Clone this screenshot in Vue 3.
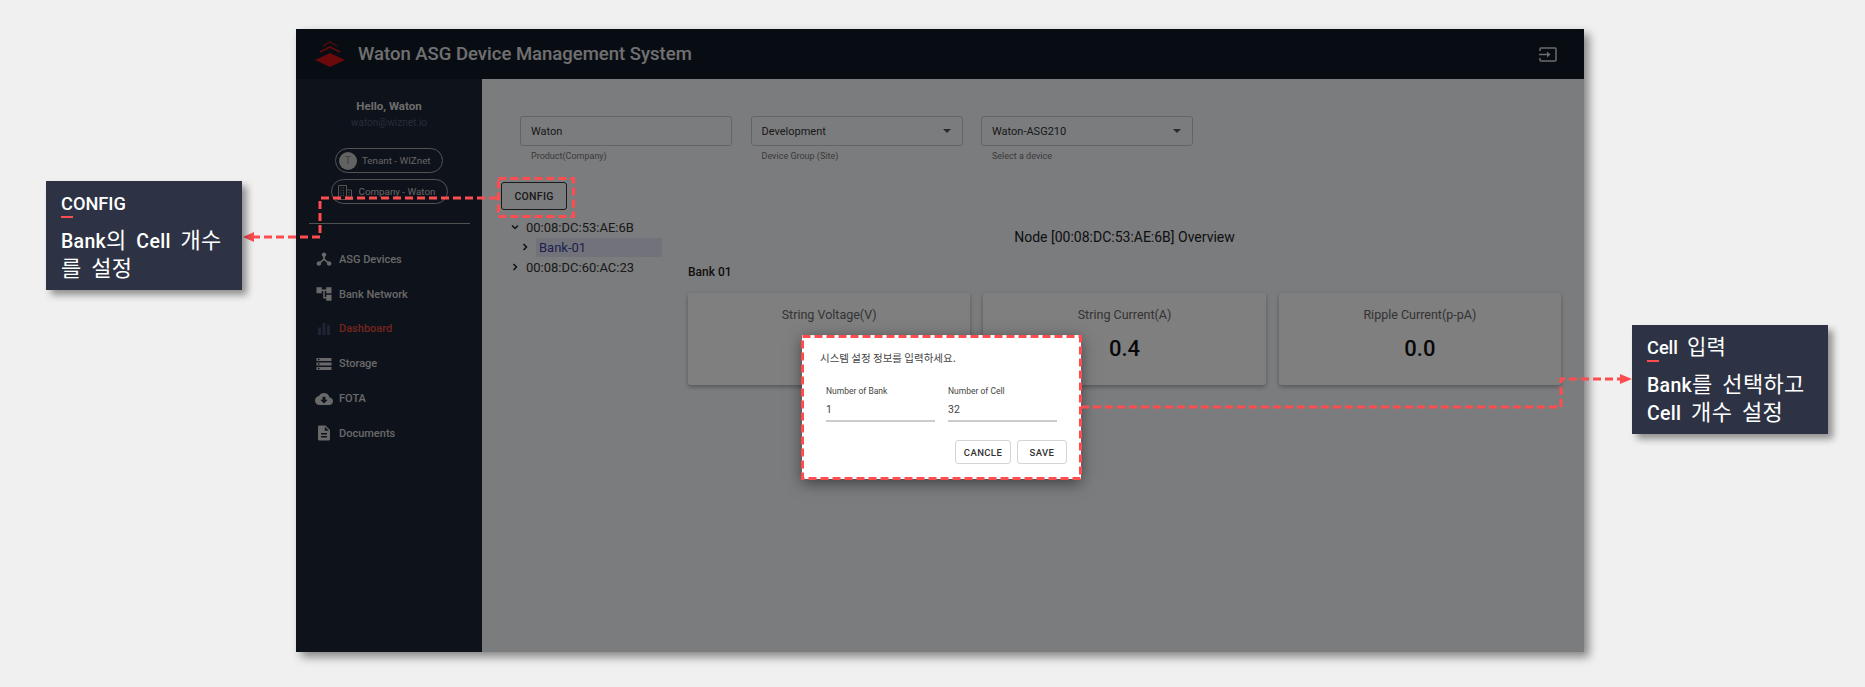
<script setup>
const fields = [
  { value: 'Waton', help: 'Product(Company)', select: false },
  { value: 'Development', help: 'Device Group (Site)', select: true },
  { value: 'Waton-ASG210', help: 'Select a device', select: true }
]

const menu = [
  { label: 'ASG Devices', d: 'M12 3.2a3 3 0 0 1 1.2 5.75V12l4.1 3.4a3 3 0 1 1-1.3 1.6L12 13.7 8 17a3 3 0 1 1-1.3-1.6l4.1-3.4V8.95A3 3 0 0 1 12 3.2z' },
  { label: 'Bank Network', d: 'M22 11V3h-7v3H9V3H2v8h7V8h2v10h4v3h7v-8h-7v3h-2V8h2v3z' },
  { label: 'Dashboard', active: true, d: 'M4 10h4v10H4zM10 4h4v16h-4zM16 7h4v13h-4z' },
  { label: 'Storage', d: 'M2 20h20v-4H2v4zm2-3h2v2H4v-2zM2 4v4h20V4H2zm4 3H4V5h2v2zm-4 7h20v-4H2v4zm2-3h2v2H4v-2z' },
  { label: 'FOTA', d: 'M19.35 10.04C18.67 6.59 15.64 4 12 4 9.11 4 6.6 5.64 5.35 8.04 2.34 8.36 0 10.91 0 14c0 3.31 2.69 6 6 6h13c2.76 0 5-2.24 5-5 0-2.64-2.05-4.78-4.65-4.96zM17 13l-5 5-5-5h3V9h4v4h3z' },
  { label: 'Documents', d: 'M14 2H6c-1.1 0-1.99.9-1.99 2L4 20c0 1.1.89 2 1.99 2H18c1.1 0 2-.9 2-2V8l-6-6zm2 16H8v-2h8v2zm0-4H8v-2h8v2zm-3-5V3.5L18.5 9H13z' }
]

// the first value sits behind the dialog in the reference
const cards = [
  { title: 'String Voltage(V)', value: '' },
  { title: 'String Current(A)', value: '0.4' },
  { title: 'Ripple Current(p-pA)', value: '0.0' }
]
</script>

<template>
  <div class="page">
    <div class="frame">
      <header class="topbar">
        <svg class="logo" viewBox="0 0 30 26" width="30" height="26" fill="none">
          <path d="M8 5l7-4 7 4" stroke="#b01818" stroke-width="1.200" />
          <path d="M5 11l10-5 10 5" stroke="#c81818" stroke-width="1.800" />
          <path d="M15 12l15 7-15 7-15-7z" fill="#d41414" />
        </svg>
        <span class="app-title">Waton ASG Device Management System</span>
        <svg class="exit" viewBox="0 0 18 15" width="18" height="15" fill="none" stroke="#d8d8d8" stroke-width="1.500">
          <path d="M1 4V2a1 1 0 0 1 1-1h14a1 1 0 0 1 1 1v11a1 1 0 0 1-1 1H2a1 1 0 0 1-1-1v-2" />
          <path d="M0 7.500h10" />
          <path d="M8 4.500l3.500 3-3.500 3z" fill="#d8d8d8" stroke="none" />
        </svg>
      </header>

      <div class="body">
        <aside class="sidebar">
          <div class="hello">Hello, Waton</div>
          <div class="email">waton@wiznet.io</div>
          <div class="chip chip-tenant">
            <span class="avatar">T</span>
            <span>Tenant - WIZnet</span>
          </div>
          <div class="chip chip-company">
            <svg viewBox="0 0 16 16" width="16" height="16" fill="none" stroke="#a8a8a8">
              <path d="M1.500 15V1.500h8V15M9.500 6h5V15M0 15.500h16M3.500 4h1M6 4h1M3.500 6.500h1M6 6.500h1M3.500 9h1M6 9h1M3.500 11.500h1M6 11.500h1M11.500 8.500h1M11.500 11h1" />
            </svg>
            <span>Company - Waton</span>
          </div>
          <div class="divider"></div>
          <nav class="menu">
            <div v-for="item in menu" :key="item.label" class="menu-item" :class="{ active: item.active }">
              <svg viewBox="0 0 24 24" width="18" height="18"><path :d="item.d" /></svg>
              <span>{{ item.label }}</span>
            </div>
          </nav>
        </aside>

        <main class="main">
          <div class="fields">
            <div v-for="f in fields" :key="f.help" class="field">
              <div class="field-box">
                <span>{{ f.value }}</span>
                <i v-if="f.select" class="caret"></i>
              </div>
              <div class="field-help">{{ f.help }}</div>
            </div>
          </div>

          <button class="config-btn">CONFIG</button>

          <div class="columns">
            <div class="tree">
              <div class="tree-row">
                <svg viewBox="0 0 10 10" width="10" height="10"><path d="M2 3.500l3 3 3-3" /></svg>
                <span>00:08:DC:53:AE:6B</span>
              </div>
              <div class="tree-row tree-child">
                <svg viewBox="0 0 10 10" width="10" height="10"><path d="M3.500 2l3 3-3 3" /></svg>
                <span class="tree-selected">Bank-01</span>
              </div>
              <div class="tree-row">
                <svg viewBox="0 0 10 10" width="10" height="10"><path d="M3.500 2l3 3-3 3" /></svg>
                <span>00:08:DC:60:AC:23</span>
              </div>
            </div>

            <div class="overview">
              <div class="overview-title">Node [00:08:DC:53:AE:6B] Overview</div>
              <div class="bank-title">Bank 01</div>
              <div class="cards">
                <div v-for="c in cards" :key="c.title" class="card">
                  <div class="card-title">{{ c.title }}</div>
                  <div v-if="c.value" class="card-value">{{ c.value }}</div>
                </div>
              </div>
            </div>
          </div>
        </main>
      </div>

      <div class="scrim"></div>

      <div class="dialog">
        <p class="dialog-text">시스템 설정 정보를 입력하세요.</p>
        <div class="dialog-inputs">
          <label class="dialog-input">
            <span>Number of Bank</span>
            <b>1</b>
          </label>
          <label class="dialog-input">
            <span>Number of Cell</span>
            <b>32</b>
          </label>
        </div>
        <div class="dialog-actions">
          <button class="btn-cancel">CANCLE</button>
          <button class="btn-save">SAVE</button>
        </div>
      </div>
    </div>

    <svg class="marks" width="1865" height="687" fill="none" stroke="#ff4d4f" stroke-width="3" stroke-dasharray="8 4">
      <rect x="498.500" y="178.500" width="75" height="38" />
      <rect x="802.500" y="336.500" width="278" height="142" />
      <path d="M497 198H320V237H252" />
      <path d="M1081 407H1561V379H1622" />
      <path d="M243 237l11-5v10z" fill="#ff4d4f" stroke="none" />
      <path d="M1632 379l-12-5v10z" fill="#ff4d4f" stroke="none" />
    </svg>

    <div class="note note-left">
      <div class="note-title"><span class="lat"><span class="first">C</span>ONFIG</span></div>
      <div class="note-text"><span class="lat">Bank</span>의 <span class="lat">Cell</span> 개수<br />를 설정</div>
    </div>
    <div class="note note-right">
      <div class="note-title"><span class="lat"><span class="first">C</span>ell</span> 입력</div>
      <div class="note-text"><span class="lat">Bank</span>를 선택하고<br /><span class="lat">Cell</span> 개수 설정</div>
    </div>
  </div>
</template>

<style>
body {
  background: #f0f0f0;
}
</style>

<style scoped>
.page {
  position: relative;
  width: 1865px;
  height: 687px;
  box-sizing: border-box;
  padding: 29px 0 0 296px;
  overflow: hidden;
  background: #f0f0f0;
  font-family: Roboto, "Noto Sans CJK KR", sans-serif;
}

.frame {
  position: relative;
  width: 1288px;
  height: 623px;
  display: flex;
  flex-direction: column;
  box-shadow: 5px 5px 9px rgba(0, 0, 0, 0.45);
}

.topbar {
  height: 50px;
  flex: none;
  display: flex;
  align-items: center;
  padding: 0 27px 0 19px;
  background: #111827;
}

.logo {
  margin-right: 13px;
}

.app-title {
  font-size: 18.500px;
  font-weight: 500;
  color: #e0e0e0;
}

.exit {
  margin-left: auto;
}

.body {
  flex: 1;
  display: flex;
  min-height: 0;
}

.sidebar {
  width: 186px;
  flex: none;
  display: flex;
  flex-direction: column;
  align-items: center;
  padding-top: 20px;
  box-sizing: border-box;
  background: #1c2436;
  color: #d0d0d0;
}

.hello {
  font-size: 11.500px;
  font-weight: 700;
  line-height: 15px;
  color: #d8d8d8;
}

.email {
  font-size: 10px;
  line-height: 14px;
  margin-top: 2px;
  color: #50596c;
}

.chip {
  display: flex;
  align-items: center;
  height: 25px;
  box-sizing: border-box;
  border: 1px solid #a8a8a8;
  border-radius: 13px;
  font-size: 9.800px;
  color: #c8c8c8;
}

.chip-tenant {
  width: 108px;
  margin-top: 18px;
  padding-left: 3px;
  gap: 5px;
}

.chip-company {
  width: 117px;
  margin-top: 6px;
  padding-left: 5px;
  gap: 6px;
}

.avatar {
  width: 18px;
  height: 18px;
  border-radius: 50%;
  background: #c4c4c4;
  color: #8a8a8a;
  font-size: 10px;
  font-weight: 500;
  display: flex;
  align-items: center;
  justify-content: center;
}

.divider {
  width: 161px;
  height: 1px;
  margin-top: 19px;
  background: #a0a0a0;
}

.menu {
  align-self: stretch;
  margin-top: 18px;
  display: flex;
  flex-direction: column;
}

.menu-item {
  height: 34.800px;
  display: flex;
  align-items: center;
  gap: 6px;
  padding-left: 19px;
  font-size: 11px;
  font-weight: 500;
  color: #d2d2d2;
}

.menu-item svg {
  fill: #d2d2d2;
}

.menu-item.active {
  color: #e04a3c;
}

.menu-item.active svg {
  fill: #3a4a68;
}

.main {
  flex: 1;
  box-sizing: border-box;
  padding: 37px 23px 0 19px;
  background: #f6f8fc;
  color: #222;
}

.fields {
  display: flex;
  gap: 18.500px;
  margin-left: 19px;
}

.field {
  width: 212px;
}

.field-box {
  height: 30px;
  box-sizing: border-box;
  display: flex;
  align-items: center;
  justify-content: space-between;
  padding: 0 11px 0 10px;
  border: 1px solid #c8c8c8;
  border-radius: 3px;
  font-size: 11px;
  color: #333;
}

.caret {
  width: 0;
  height: 0;
  border-left: 4px solid transparent;
  border-right: 4px solid transparent;
  border-top: 4px solid #555;
}

.field-help {
  margin-top: 4px;
  padding-left: 11px;
  font-size: 9px;
  line-height: 12px;
  color: #777;
}

.config-btn {
  display: block;
  width: 66px;
  height: 28px;
  margin-top: 20px;
  padding: 0;
  border: 1px solid #333;
  border-radius: 3px;
  background: transparent;
  font-family: inherit;
  font-size: 10.500px;
  font-weight: 500;
  letter-spacing: 0.3px;
  color: #333;
}

.columns {
  display: flex;
  margin-top: 7px;
}

.tree {
  width: 187px;
  flex: none;
  font-size: 13px;
  color: #333;
}

.tree-row {
  height: 20px;
  display: flex;
  align-items: center;
  gap: 6px;
  padding-left: 9px;
}

.tree-row svg {
  flex: none;
  fill: none;
  stroke: #222;
  stroke-width: 1.500;
}

.tree-child {
  padding-left: 19px;
}

.tree-selected {
  width: 126px;
  height: 19px;
  line-height: 19px;
  padding-left: 3px;
  box-sizing: border-box;
  background: #e4e6f4;
  color: #3a3fa0;
}

.overview {
  flex: 1;
}

.overview-title {
  margin-top: 11px;
  text-align: center;
  font-size: 14px;
  line-height: 18px;
  color: #222;
}

.bank-title {
  margin-top: 19px;
  font-size: 12px;
  font-weight: 500;
  line-height: 14px;
  color: #222;
}

.cards {
  display: grid;
  grid-template-columns: repeat(3, 1fr);
  gap: 13px;
  margin-top: 14px;
}

.card {
  height: 92px;
  box-sizing: border-box;
  padding-top: 14px;
  text-align: center;
  background: #fff;
  border-radius: 3px;
  box-shadow: 0 2px 4px rgba(0, 0, 0, 0.3);
}

.card-title {
  font-size: 12.500px;
  line-height: 16px;
  color: #666;
}

.card-value {
  margin-top: 13px;
  font-size: 22px;
  font-weight: 500;
  line-height: 26px;
  color: #111;
}

.scrim {
  position: absolute;
  inset: 0;
  background: rgba(0, 0, 0, 0.5);
}

.dialog {
  position: absolute;
  left: 506px;
  top: 306px;
  width: 279px;
  height: 144px;
  box-sizing: border-box;
  padding: 15px 14px 0 18px;
  background: #fff;
  box-shadow: 0 4px 14px rgba(0, 0, 0, 0.5);
}

.dialog-text {
  margin: 0;
  font-family: "Noto Sans CJK KR", sans-serif;
  font-size: 10.500px;
  line-height: 16px;
  color: #444;
}

.dialog-inputs {
  display: flex;
  gap: 13px;
  margin-top: 19px;
  padding-left: 6px;
}

.dialog-input {
  width: 109px;
  display: block;
  border-bottom: 2px solid #ccc;
  height: 35px;
}

.dialog-input span {
  display: block;
  font-size: 8.500px;
  line-height: 12px;
  color: #444;
}

.dialog-input b {
  display: block;
  margin-top: 6px;
  font-size: 10.500px;
  font-weight: 400;
  line-height: 14px;
  color: #444;
}

.dialog-actions {
  display: flex;
  justify-content: flex-end;
  gap: 6px;
  margin-top: 18px;
}

.dialog-actions button {
  height: 24px;
  padding: 0;
  border: 1px solid #d4d4d4;
  border-radius: 3px;
  background: #fff;
  font-family: inherit;
  font-size: 9.500px;
  font-weight: 500;
  letter-spacing: 0.4px;
  color: #333;
}

.btn-cancel {
  width: 56px;
}

.btn-save {
  width: 50px;
}

.marks {
  position: absolute;
  left: 0;
  top: 0;
  pointer-events: none;
}

.note {
  position: absolute;
  width: 196px;
  height: 109px;
  box-sizing: border-box;
  padding: 10px 4px 0 15px;
  background: #2d3344;
  box-shadow: 5px 5px 7px rgba(0, 0, 0, 0.4);
  color: #fff;
  font-weight: 400;
}

.note-left {
  left: 46px;
  top: 181px;
}

.note-right {
  left: 1632px;
  top: 325px;
}

.lat {
  font-weight: 500;
}

.note-title {
  height: 26px;
  font-size: 21px;
  line-height: 24px;
  word-spacing: 4px;
}

.note-title .lat {
  font-size: 18.200px;
}

.first {
  display: inline-block;
  border-bottom: 2px solid #ff4d4f;
  line-height: 25px;
  height: 25px;
}

.note-text {
  margin-top: 10px;
  font-size: 22px;
  line-height: 27px;
  word-spacing: 4px;
  letter-spacing: 0.3px;
}

.note-text .lat {
  font-size: 19.500px;
}
</style>
